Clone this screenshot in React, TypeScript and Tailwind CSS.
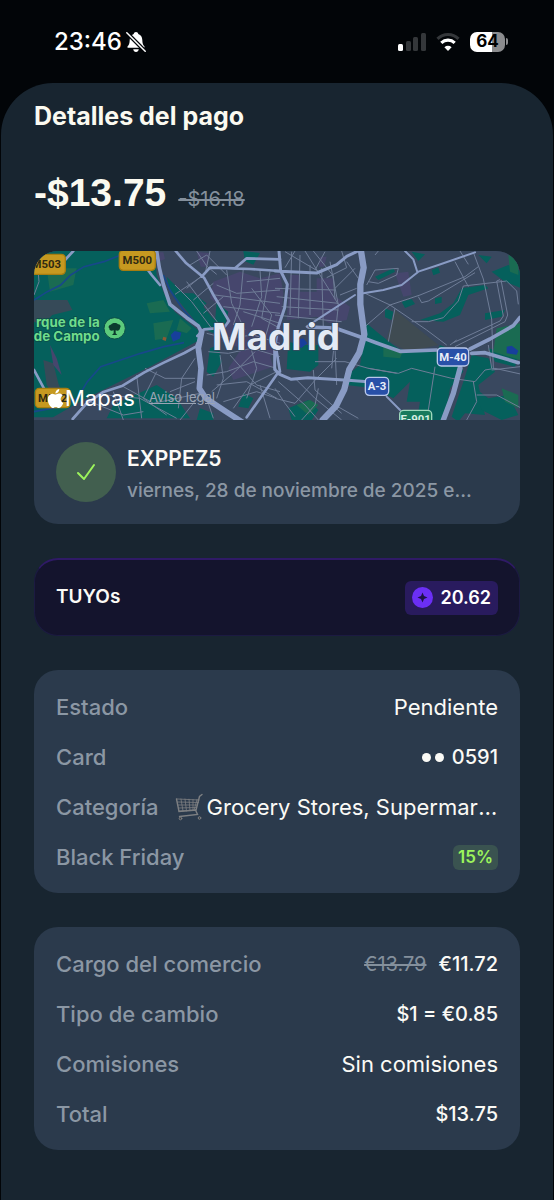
import React from 'react';

function MutedBell() {
  return (
    <svg viewBox="0 0 20 22" className="ml-1 h-[22px] w-5" aria-label="Silencio">
      <path d="M10 1c1.3 0 2.1.8 2.3 1.9 2.7.9 3.9 3.2 4 6 .1 3.600.8 5 2 6.300.6.700.3 1.600-.7 1.600H2.400c-1 0-1.300-.9-.7-1.600 1.200-1.300 1.900-2.700 2-6.300.1-2.800 1.300-5.100 4-6C7.900 1.800 8.700 1 10 1z" fill="#fff" />
      <path d="M7.200 18.300h5.600c-.2 1.600-1.300 2.700-2.800 2.700s-2.600-1.100-2.800-2.700z" fill="#fff" />
      <path d="M.5 1.500l19 19" stroke="#020508" strokeWidth="4" />
      <path d="M.8 1.800l18.400 18.400" stroke="#fff" strokeWidth="1.500" strokeLinecap="round" />
    </svg>
  );
}

function Signal() {
  return (
    <svg viewBox="0 0 28 20" className="h-5 w-7" aria-label="Cobertura">
      <rect x="0" y="12" width="5" height="7" rx="1.500" fill="#fff" />
      <rect x="8" y="9" width="5" height="10" rx="1.500" fill="#34373a" />
      <rect x="15" y="5" width="5" height="14" rx="1.500" fill="#34373a" />
      <rect x="23" y="1" width="5" height="18" rx="1.500" fill="#34373a" />
    </svg>
  );
}

function Wifi() {
  return (
    <svg viewBox="0 0 24 20" className="h-5 w-6" fill="none" aria-label="Wifi">
      <path d="M1.500 6.800a15 15 0 0 1 21 0" stroke="#34373a" strokeWidth="3.200" />
      <path d="M5.300 10.800a9.800 9.800 0 0 1 13.400 0" stroke="#fff" strokeWidth="3.200" />
      <path d="M12 19l-3.600-3.800a5.200 5.200 0 0 1 7.200 0z" fill="#fff" />
    </svg>
  );
}

function StatusBar() {
  return (
    <header className="flex h-[83px] items-center justify-between pl-[54px] pr-[46px] text-white">
      <div className="flex items-center">
        <time className="text-2xl font-medium">23:46</time>
        <MutedBell />
      </div>
      <div className="flex items-center gap-[10px]">
        <Signal />
        <Wifi />
        <div className="flex items-center gap-px">
          <span className="flex h-5 w-[35px] items-center justify-center rounded-[7px] bg-linear-to-r from-white from-64% to-[#8b8c8e] to-64% text-[17px] font-bold text-black">
            64
          </span>
          <span className="h-[7px] w-[2px] rounded-r bg-[#8b8c8e]" />
        </div>
      </div>
    </header>
  );
}

type ShieldProps = { x: number; y: number; w: number; h: number; label: string; fill: string; ink: string; edge: string };

function Shield({ x, y, w, h, label, fill, ink, edge }: ShieldProps) {
  return (
    <g>
      <rect x={x} y={y} width={w} height={h} rx="12" fill={fill} stroke={edge} strokeWidth="4" />
      <text x={x + w / 2} y={y + h / 2 + 12} textAnchor="middle" fontFamily="Roboto, sans-serif" fontSize="34" fontWeight="700" fill={ink}>
        {label}
      </text>
    </g>
  );
}

function CityMap() {
  return (
    <svg viewBox="12 18 1458 507" preserveAspectRatio="xMidYMid slice" className="h-full w-full" role="img" aria-label="Mapa de Madrid">
      <rect x="0" y="0" width="1500" height="540" fill="#39485f" />

      {/* parks */}
      <g fill="#05605c">
        <path d="M12 18H375L380 90l24 60 30 50 70 55 5 30-150 80-100 50-100 50-90 52H12z" />
        <path d="M410 95l50 50 30 0 40 30-10 10 50 60-20 20-40-20-50-60-40-50z" />
        <path d="M560 170l40 20-5 50-40-10zM540 310l25-10 10 50-25 45-20-15zM380 420l60 40 40 60H230l20-40z" />
        <path d="M640 445l30 15-15 30-30-5zM510 490l40 15v20h-50zM640 18l50 6-20 35-25-10z" />
      </g>
      <g transform="translate(735 0)" fill="#05605c">
        <path d="M40 290l40 10 50 0 0 60-25 20-70-8z" />
        <path d="M275 235l30 25 50 40 30 20 100 0 10-20 50 20 20 60-40 50-10 60-20 40-70 0 10-60-40 0 10-60-50 50-60-30-80-10-10-20 50-40z" />
        <path d="M590 330l50 10 20 40-50 40 20 90-60-5-20 25-20-15 20-60 20-60z" />
        <path d="M560 130l70-10 10 10-60 20-25 60-50 20-70-5 60-20 40-30zM650 80l50-20 40 20v50l-50-20zM300 95l55-25 5 10-50 25z" />
        <path d="M410 20l40 8-20 20zM610 30l40 5-15 20zM470 75l20-8 5 16-20 8zM630 205l60-10-10 20-50 10z" />
        <path d="M220 385l30 0-5 30-25-5zM380 170l30-8 10 15-30 12zM480 160l20-5v18l-20 4zM330 190l25 10-5 25-20-8zM640 310l90 25-10 30-60-15zM600 430l40 30 60-10 30 60-50 15-60-30z" />
        <path d="M40 490l60-25 30 30-20 30H50z" />
      </g>
      <g fill="#1a6b52">
        <path d="M50 70l90 0-10 50-70 20zM350 175l50-10 20 35-60 5zM370 235l60-10-20 55-35 5zM450 220l35 30-15 15-30-10z" />
        <path d="M800 480l40-15 25 15-30 30z M1400 250l70-15v110l-80-25z M1060 300l60 15-10 25-50-5z M1415 430l50 20v40l-40-20z M1435 30l30 10v50l-25-10z" />
      </g>
      <g fill="#364a58">
        <path d="M12 165l100 0 15 30-60 15-30 30-25-10zM40 345l30 10 15 60 25 60-20 5-40-60z" />
        <path d="M1095 195l130 105-90 20-65-35z" fill="#3f4b52" />
      </g>

      {/* dense centre */}
      <g fill="#46466d">
        <path d="M550 110l80-30 60 20 60-15 10 60-10 160-30 30 10 30-60 20-60 20-15-35 40-60-60-20 20-90-55-40z" />
        <path d="M780 90l30 0v50h50v-40h50v50l50 35-10 40-50 10-40-20-90 10zM1095 85l40-5 10 70-25 5z" />
        <path d="M500 20l40 5-8 40-20 0zM870 35l20 0-8 30-15 0zM385 22l15 0 5 20-20 8zM60 300l20 40 15 50-25-30z" />
      </g>

      {/* streams and ponds */}
      <g fill="none" stroke="#17488a" strokeWidth="5">
        <path d="M12 165l40-25 40-20 30-30 40-25 60-15 50-20 60-15M12 500l80-15 50-25 30-50 40-45 60-20 60-20 70-20 60-12" />
        <path d="M400 90l20 45 40 60 60 65" />
      </g>
      <path d="M422 270l12-12 20 5-5 18-20 9zM800 285l20-5 12 15-18 14-14-8zM1430 305l15-3 20 15-5 12-30-4z" fill="#173f9c" />
      <path d="M400 275l10 3-3 10-10-4z" fill="#8a5a35" />

      {/* streets */}
      <g fill="none" stroke="#6f7d97" strokeWidth="3" strokeLinejoin="round">
        <path d="M500 18l30 45 30 25M540 18l-15 70-90 60M480 60l50-30 60 60M470 130l60-50M490 165l60-50M520 205l60-50M435 120l50 50 60 80M470 110l45 60 50 65" />
        <path d="M560 120l60 25 130-10M555 150l195 25M580 185l170 20M590 75l15 100 40 80M640 70l-10 110-20 60M690 75l5 80-30 90M720 80l-25 140 55 30M650 110l100-10M640 200l110 35M665 130l60 80-20 70" />
        <path d="M530 265l60 15 80-10 80 25M535 320l60 5 70-15 85 25M570 330l10 70-20 60M530 390l60-10 80-30 70 20M545 440l70-60 60-60M600 330l80 90 70 20M660 300l20 70-30 90" />
        <path d="M320 390l15 130M345 370l60 30 90 0M380 380l-40 80 70 50M495 340l-40 60-10 90M420 440l75-30M230 450l100 10 110 60M280 425l90 50 140-30M180 470l100 40 60-10" />
        <path d="M510 450l-60 75M530 460l20 60M580 470l100-30 60 20M560 420l90-10 90 50M690 420l30 100M12 150l15-40-5-60M250 440l30 85M610 490l50-70 80-40" />
      </g>
      <g transform="translate(735 0)" fill="none" stroke="#6f7d97" strokeWidth="3" strokeLinejoin="round">
        <path d="M50 20l-5 190M75 30l-5 190M105 60v150M140 70l5 180M165 50l25 130M0 130l180 5M5 155l185 20M20 185l170 10M0 210l200 20M30 20l110 65M90 18l100 160M115 18l60 75 5 70M150 20l-30 55M60 18l-30 50" />
        <path d="M200 18l15 50-60 30M180 130l60-60M215 50l35 50M190 180l-20 190M195 150l50-20M270 145l75 35 110 75 60 45M360 190l-20 100M345 180l90-30 135-55 40-30M345 180l-75 65M430 155l10 18 20-5 140-85" />
        <path d="M275 120l25-45 70-5-5 20-55 25-30-5M300 30l10-12M410 230l50 0 45-12 45-50 15-45 130-15 30 30 5 40M595 22l30 80 25 120 5 150M540 50l40 75M555 18l25 40" />
        <path d="M665 108l20 105-10 15-140 65M678 105l20 105-8 20-150 75M665 108l10-4M525 300l20-15M480 365l-20 130M280 370l90 15 40-15 120 30 70 10 30-35 30-5 90 20M595 410l10 60-30 55M605 450l60 0 75 40" />
        <path d="M120 350l90 0 70 20 85 15M115 375l5 60 80 70M60 400l60 60 80 65M10 410l80 70 40 45M0 460l60 15 65-75 60-60M180 310l5 110M0 430l30 45 30 40M130 430l-10 50-40 45M240 345l-20 60M640 300l10 70M650 375l85-10M180 480l70 40" />
      </g>

      {/* main roads */}
      <g fill="none" stroke="#899bc4" strokeWidth="8" strokeLinecap="round" strokeLinejoin="round">
        <path d="M128 522l40-45 50-35 60-20 65-40 60-30 60-28 40-22" />
        <path d="M380 18l8 50 12 50 20 60 50 40 35 25 10 20" strokeWidth="11" />
        <path d="M335 50l30 40 25 30M437 18l30 35 55 45 30 55 45 75-15 20-60 5-20 20M515 95l25-27 75 2 35-30 100 3M600 70l60 2 90 6" />
        <path d="M515 260l-10 50 8 60-5 60 20 30 60 40 70 45" strokeWidth="17" />
        <path d="M745 382l-60 85-35 50M12 375l35 65 10 30M105 45l25-27M735 290l15 90M500 300l15-30" />
      </g>
      <g transform="translate(735 0)" fill="none" stroke="#899bc4" strokeWidth="9" strokeLinecap="round" strokeLinejoin="round">
        <path d="M0 78l125 6 60-25 30-25 30-14M12 18l5 60 20 40-8 70-20 60-10 60 0 65 15 15 35 15 50-5 120 8 70 5" />
        <path d="M265 145l60-10 55-15 50-40 60-20 110-38M390 18l25 25 12 38" strokeWidth="6" />
        <path d="M100 246l80 3 85 30 40 15 70 25 110-4M585 312l60-30 70-40 20-25M590 325l40-2 100 30" strokeWidth="11" />
        <path d="M258 18l8 50-10 50 0 60 12 90-15 55-30 50-15 60-25 50-40 42" strokeWidth="19" />
        <path d="M555 370l-20 75-30 80" strokeWidth="16" />
        <path d="M335 455l40 40M95 245l60-40 85-55" strokeWidth="6" />
      </g>

      {/* labels */}
      <Shield x={-8} y={28} w={114} h={60} label="M503" fill="#c69920" ink="#2f2a12" edge="#a67d10" />
      <Shield x={268} y={16} w={108} h={60} label="M500" fill="#c69920" ink="#2f2a12" edge="#a67d10" />
      <Shield x={16} y={430} w={104} h={58} label="M502" fill="#c69920" ink="#2f2a12" edge="#a67d10" />
      <Shield x={1006} y={397} w={70} h={54} label="A-3" fill="#2850a8" ink="#e8edf8" edge="#b9c8ea" />
      <Shield x={1222} y={309} w={94} h={54} label="M-40" fill="#2850a8" ink="#e8edf8" edge="#b9c8ea" />
      <Shield x={1109} y={496} w={96} h={54} label="E-901" fill="#177a5c" ink="#d5efe3" edge="#9ed8bd" />
      <g fill="#6fdc8c" stroke="#0a4b46" strokeWidth="4" paintOrder="stroke" fontFamily="Inter, sans-serif" fontSize="40" fontWeight="700" textAnchor="end">
        <text x="209" y="245">rque de la</text>
        <text x="209" y="288">de Campo</text>
      </g>
      <circle cx="254" cy="250" r="32" fill="#5ccb7c" stroke="#0a4b46" strokeWidth="3" />
      <path d="M246 270l5-5v-9c-8 4-14-1-13-6-5-5 0-11 5-11 2-6 18-7 21-1 7 0 10 6 6 11 0 6-6 10-13 7v9l5 5z" fill="#0c3b2e" />
      <text x="738" y="315" textAnchor="middle" fontFamily="Inter, sans-serif" fontSize="111" fontWeight="700" fill="#e3eaf5" stroke="#39485f" strokeWidth="5" paintOrder="stroke">
        Madrid
      </text>
    </svg>
  );
}

function AppleLogo() {
  return (
    <svg viewBox="0 0 24 24" className="h-[19px] w-[19px]" fill="#fff" aria-hidden="true">
      <path d="M12.150 6.900c-.95 0-2.420-1.080-3.960-1.040-2.040.03-3.910 1.180-4.960 3.010-2.120 3.680-.55 9.100 1.520 12.090 1.010 1.450 2.210 3.090 3.790 3.040 1.520-.07 2.090-.99 3.930-.99 1.830 0 2.350.99 3.960.95 1.640-.03 2.680-1.480 3.680-2.950 1.160-1.690 1.640-3.320 1.660-3.410-.04-.01-3.180-1.220-3.220-4.860-.03-3.040 2.480-4.490 2.600-4.560-1.430-2.090-3.620-2.320-4.390-2.380-2-.16-3.680 1.100-4.610 1.100zM15.530 3.830c.84-1.010 1.400-2.430 1.250-3.830-1.210.05-2.660.8-3.530 1.820-.78.9-1.450 2.340-1.270 3.710 1.340.1 2.720-.69 3.550-1.700" />
    </svg>
  );
}

function Cart() {
  return (
    <svg viewBox="0 0 28 28" className="h-7 w-7 shrink-0" fill="none" stroke="#7d7f82" strokeLinecap="round" aria-hidden="true">
      <path d="M2 6l22 1M2.500 9l21 .500M3 12l19.500 0M4 15l17.500-.500M4 18l17-1M6 6l2 12M10 6l1.500 12M14 6.200l1 11.500M18 6.500l0 11M22 6.500l-3 11" strokeWidth="0.800" />
      <path d="M27 1.500l-2.500 2L21 17l-17 1.500L1.500 6M20.500 17l2 4.500L4.500 23.500" strokeWidth="1.400" />
      <circle cx="5.500" cy="25.500" r="1.300" fill="#3c3f42" />
      <circle cx="24.500" cy="25" r="1.300" fill="#3c3f42" />
    </svg>
  );
}

function Row({ label, children }: { label: string; children: React.ReactNode }) {
  return (
    <div className="flex h-[50px] items-center justify-between gap-4 text-[22px]">
      <dt className="shrink-0 font-medium text-[#8b97a4]">{label}</dt>
      <dd className="flex min-w-0 items-center text-[#fbfaf6]">{children}</dd>
    </div>
  );
}

function Money({ children }: { children: React.ReactNode }) {
  return <span className="text-xl font-medium">{children}</span>;
}

export default function App() {
  return (
    <div className="min-h-screen bg-[#020508] font-['Inter','Liberation_Sans',sans-serif]">
      <StatusBar />
      <main className="mx-px min-h-[1117px] rounded-t-[52px] bg-[#182530] px-[33px] pb-12 pt-[17px]">
        <h1 className="text-[25px] leading-8 font-bold text-[#fbfaf0]">Detalles del pago</h1>
        <p className="mt-[35px] flex items-baseline gap-3 leading-[52px]">
          <span className="font-['Liberation_Sans',sans-serif] text-[39px] font-bold text-[#fbfaf0]">-$13.75</span>
          <s className="text-xl text-[#84909c]">-$16.18</s>
        </p>

        <section className="mt-8 overflow-hidden rounded-3xl bg-[#2b3a4c]">
          <div className="relative h-[169px]">
            <CityMap />
            <div className="absolute bottom-2 left-3 flex items-center">
              <AppleLogo />
              <span className="text-[22px] leading-7 text-white">Mapas</span>
              <a href="#legal" className="ml-[14px] text-[13px] text-[#9aa4b4] underline">Aviso legal</a>
            </div>
          </div>
          <div className="flex h-[104px] items-center gap-[11px] pl-[22px] pr-11">
            <span className="flex h-[60px] w-[60px] shrink-0 items-center justify-center rounded-full bg-[#425f4f]">
              <svg viewBox="0 0 20 20" className="h-5 w-5" fill="none" stroke="#9cf45c" strokeWidth="2" strokeLinecap="round" strokeLinejoin="round" aria-hidden="true">
                <path d="M2 11l6 6L18 3" />
              </svg>
            </span>
            <div className="min-w-0 pt-[6px]">
              <h2 className="text-[21px] leading-8 font-semibold text-[#fbfaf6]">EXPPEZ5</h2>
              <p className="truncate text-[19px] leading-8 font-medium text-[#8b97a4]">viernes, 28 de noviembre de 2025 en línea</p>
            </div>
          </div>
        </section>

        <section className="mt-[34px] flex h-[78px] items-center justify-between rounded-3xl border border-t-2 border-[#1c1a42] border-t-[#2f1a66] bg-[#14142d] px-[21px]">
          <h2 className="text-[19px] font-semibold text-[#fbfaf6]">TUYOs</h2>
          <span className="flex h-[34px] items-center gap-[7px] rounded-md bg-[#291b5e] px-[7px] text-lg font-semibold text-white">
            <svg viewBox="0 0 21 21" className="h-[21px] w-[21px]" aria-hidden="true">
              <circle cx="10.500" cy="10.500" r="10.500" fill="#6b2ff5" />
              <path d="M10.500 5.500l1.500 3.500 3.500 1.500-3.500 1.500-1.500 3.500-1.500-3.500-3.500-1.500 3.500-1.500z" fill="#1d1247" />
            </svg>
            20.62
          </span>
        </section>

        <dl className="mt-[34px] rounded-3xl bg-[#2b3a4c] px-[22px] pb-[11px] pt-3">
          <Row label="Estado">Pendiente</Row>
          <Row label="Card">
            <span className="mr-2 flex gap-1">
              <i className="h-[9px] w-[9px] rounded-full bg-[#fbfaf6]" />
              <i className="h-[9px] w-[9px] rounded-full bg-[#fbfaf6]" />
            </span>
            <Money>0591</Money>
          </Row>
          <Row label="Categoría">
            <Cart />
            <span className="ml-1 truncate">Grocery Stores, Supermarkets</span>
          </Row>
          <Row label="Black Friday">
            <span className="rounded-md bg-[#3a5350] px-[5px] text-[17px] leading-[25px] font-semibold text-[#9cf45c]">15%</span>
          </Row>
        </dl>

        <dl className="mt-[34px] rounded-3xl bg-[#2b3a4c] px-[22px] pb-[11px] pt-3">
          <Row label="Cargo del comercio">
            <s className="mr-3 text-xl text-[#84909c]">€13.79</s>
            <Money>€11.72</Money>
          </Row>
          <Row label="Tipo de cambio"><Money>$1 = €0.85</Money></Row>
          <Row label="Comisiones">Sin comisiones</Row>
          <Row label="Total"><Money>$13.75</Money></Row>
        </dl>
      </main>
    </div>
  );
}
